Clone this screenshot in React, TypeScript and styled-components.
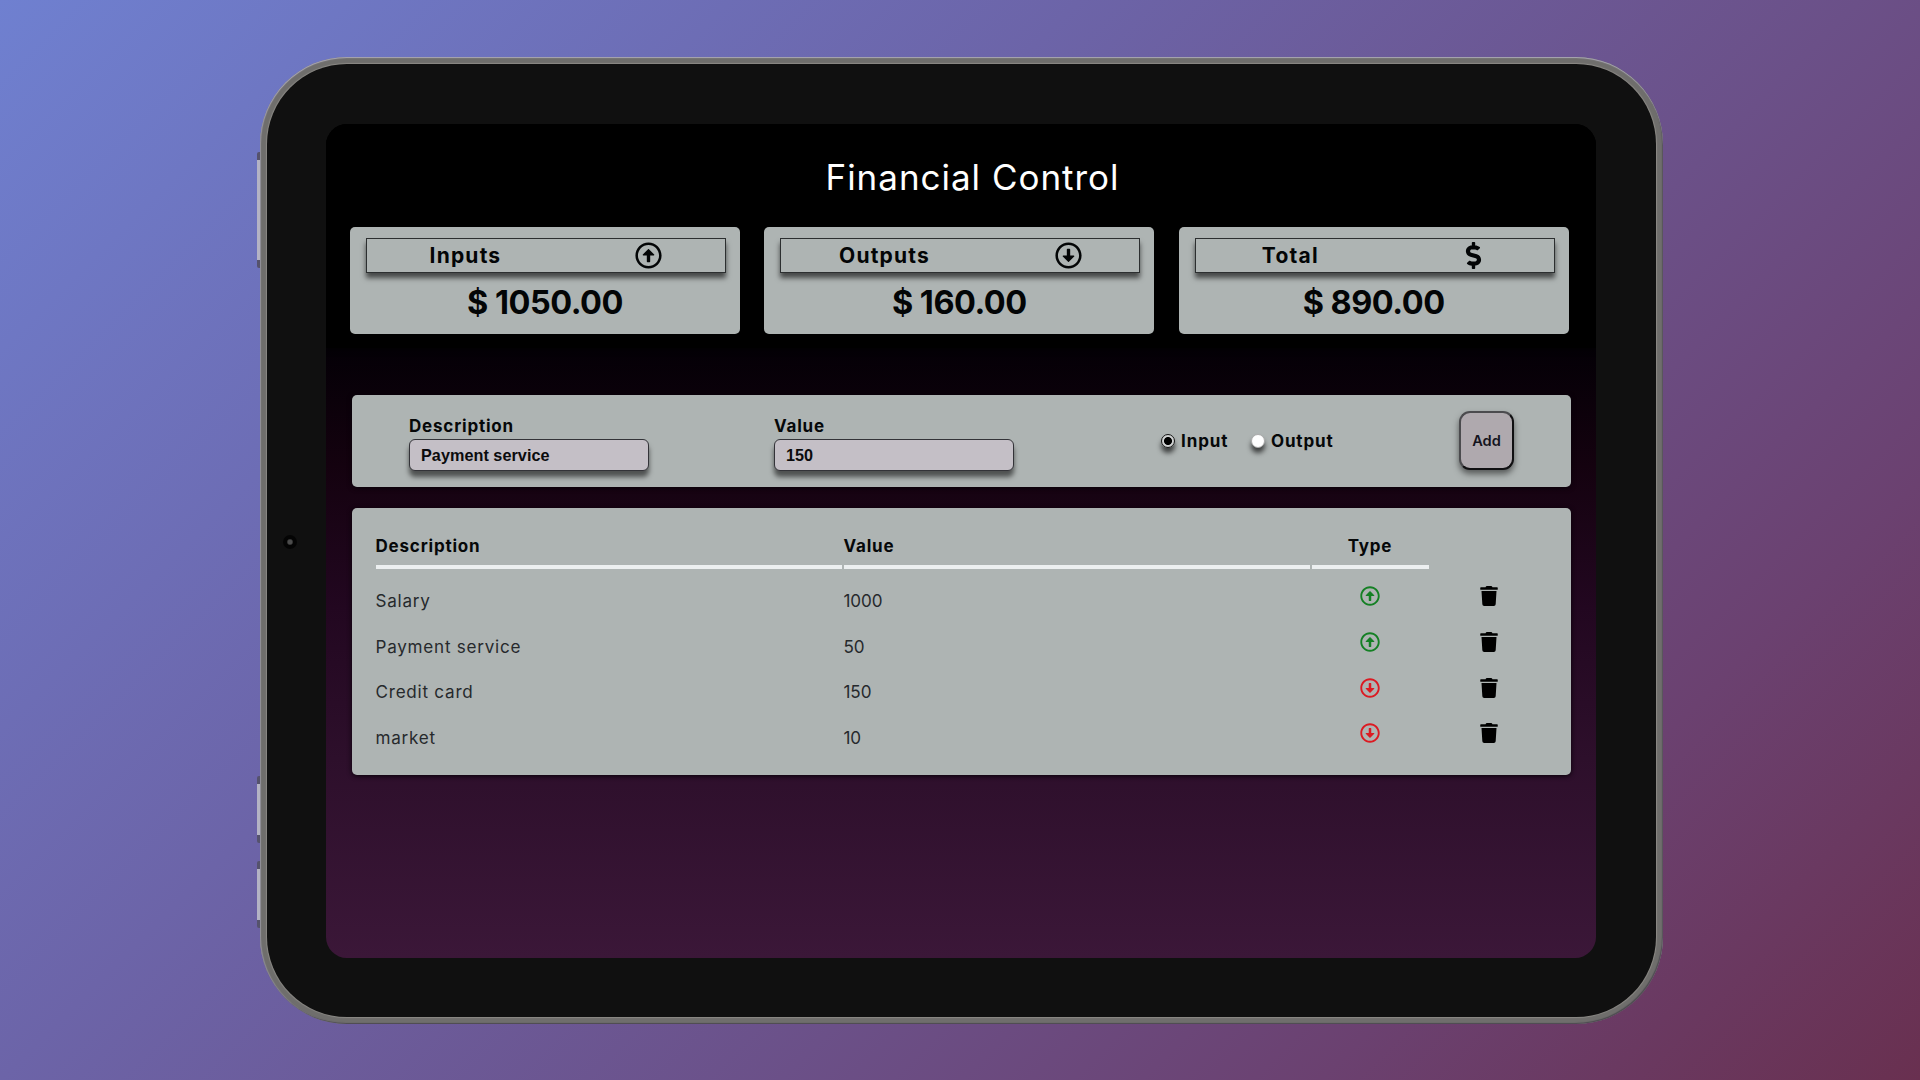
import React from "react";
import styled, { createGlobalStyle } from "styled-components";
import {
  FaRegArrowAltCircleDown,
  FaRegArrowAltCircleUp,
  FaDollarSign,
  FaTrash,
} from "react-icons/fa";

const FONT = `Inter, "Noto Sans", sans-serif`;

const GlobalStyle = createGlobalStyle`
  * { box-sizing: border-box; margin: 0; padding: 0; }
  body { font-family: ${FONT}; overflow: hidden; }
`;

const Backdrop = styled.div`
  width: 1920px;
  height: 1080px;
  padding: 57px 0 0 260px;
  background: linear-gradient(135deg, #6f80d0 0%, #6c64a8 36%, #6b5088 62%, #6b4170 80%, #693050 100%);
`;

const Tablet = styled.div`
  position: relative;
  width: 1403px;
  height: 967px;
  padding: 7px;
  border-radius: 87px;
  background: #6f6e6c;
  box-shadow: inset 0 1px 1px #aaa8b4, inset -1px -1px 1px #4d4a50, inset 1px 0 1px #908e98;
`;

const Bezel = styled.div`
  height: 953px;
  padding: 60px 59px;
  border-radius: 80px;
  background: #101010;
  box-shadow: 0 0 1px 1px #8b8985;
`;

const SideKey = styled.i<{ $top: number; $height: number }>`
  position: absolute;
  left: -3px;
  top: ${(p) => p.$top}px;
  width: 3px;
  height: ${(p) => p.$height}px;
  border: solid #55526c;
  border-width: 8px 0;
  border-radius: 2px 0 0 2px;
  background: #b4b3c4;
`;

const Camera = styled.i`
  position: absolute;
  left: 23px;
  top: 478px;
  width: 14px;
  height: 14px;
  border-radius: 50%;
  background: radial-gradient(circle, #4c4c4c 0 2px, #040404 3.5px);
`;

const Screen = styled.main`
  display: flex;
  flex-direction: column;
  width: 1270px;
  height: 834px;
  overflow: hidden;
  border-radius: 21px;
  background: linear-gradient(180deg, #000 0%, #040006 27%, #14020f 41%, #220720 58%, #2d0f2b 76%, #3b1738 100%);
`;

const Header = styled.header`
  height: 224px;
  padding: 30px 28px 0 24px;
  background: #000;
  box-shadow: 0 0 6px #000;
`;

const Title = styled.h1`
  height: 73px;
  padding-left: 27px;
  line-height: 46px;
  text-align: center;
  font-size: 35px;
  font-weight: 400;
  letter-spacing: 0.98px;
  color: #fff;
`;

const Cards = styled.section`
  display: grid;
  grid-template-columns: repeat(3, 390px);
  gap: 24.3px;
`;

const Card = styled.article`
  height: 107px;
  padding: 11px 14px 0 16px;
  border-radius: 5px;
  background: #aeb4b3;
`;

const CardHead = styled.div`
  display: flex;
  align-items: center;
  justify-content: space-around;
  height: 35px;
  border: 1.5px solid #2c2f30;
  box-shadow: 0 5px 5px rgba(0, 0, 0, 0.6);
  font-size: 27px;
  color: #030506;
`;

const CardTitle = styled.h2`
  margin-right: 9px;
  font-size: 21px;
  font-weight: 650;
  letter-spacing: 1.2px;
`;

const Amount = styled.p`
  padding: 9px 2px 0 0;
  line-height: 42px;
  text-align: center;
  font-size: 32.5px;
  font-weight: 700;
  letter-spacing: -0.5px;
  color: #030506;
`;

const Panel = styled.section`
  width: 1219px;
  margin-left: 25.5px;
  border-radius: 5px;
  background: #aeb4b3;
  box-shadow: 0 1px 5px #080008;
`;

const Form = styled(Panel).attrs({ as: "form" })`
  display: flex;
  align-items: flex-start;
  height: 92px;
  margin-top: 47px;
  padding-left: 57.5px;
`;

const Field = styled.label`
  display: block;
  width: 365px;
  padding-top: 20px;
  line-height: 22px;
  font-size: 17px;
  font-weight: 650;
  letter-spacing: 0.8px;
  color: #060809;
`;

const TextInput = styled.input`
  display: block;
  width: 240px;
  height: 32px;
  margin-top: 2px;
  padding: 1px 11px 0;
  border: 1.5px solid #333338;
  border-radius: 6px;
  background: #c4bfc6;
  box-shadow: 0 6px 5px rgba(0, 0, 0, 0.55);
  font: bold 16.2px "Liberation Sans", Arial, sans-serif;
  letter-spacing: 0.05px;
  color: #0b0b0d;
`;

const Options = styled.div`
  display: flex;
  align-items: center;
  gap: 22.5px;
  width: 320px;
  height: 92px;
  padding-left: 22px;
`;

const Option = styled.label`
  display: flex;
  align-items: center;
  gap: 6px;
  font-size: 17px;
  font-weight: 650;
  letter-spacing: 0.9px;
  color: #060809;
`;

const Radio = styled.input.attrs({ type: "radio" })`
  appearance: none;
  width: 14px;
  height: 14px;
  border-radius: 50%;
  border: 1px solid #aaa;
  background: #fff;
  box-shadow: 0 5px 5px rgba(0, 0, 0, 0.65);

  &:checked {
    border: 1.5px solid #151515;
    background: radial-gradient(circle, #000 0 3.6px, #d0d2d2 4.4px);
  }
`;

const AddButton = styled.button`
  width: 55px;
  height: 59px;
  margin-top: 16px;
  border: 2px solid;
  border-color: #4b4b4e #101012 #101012 #4b4b4e;
  border-radius: 11px;
  background: #afa9ae;
  box-shadow: 0 4px 6px rgba(0, 0, 0, 0.5);
  font: 600 14.6px ${FONT};
  color: #14141e;
`;

const Records = styled(Panel)`
  height: 267px;
  margin-top: 21px;
  padding: 24px;
`;

const Table = styled.table`
  border-spacing: 2px 0;
  margin-left: -2px;
  table-layout: fixed;
  width: 1172px;
`;

const Th = styled.th<{ $width: number; $center?: boolean; $bare?: boolean }>`
  width: ${(p) => p.$width}px;
  height: 37px;
  padding-bottom: 8px;
  border-bottom: ${(p) => (p.$bare ? "0" : "4px solid #eceff0")};
  vertical-align: bottom;
  text-align: ${(p) => (p.$center ? "center" : "left")};
  line-height: 22px;
  font-size: 17px;
  font-weight: 650;
  letter-spacing: 0.8px;
  color: #060809;
`;

const Td = styled.td<{ $spacing: number }>`
  height: 45.7px;
  padding-top: 18px;
  font-size: 17.1px;
  line-height: 24px;
  letter-spacing: ${(p) => p.$spacing}px;
  color: #26292c;
`;

const IconCell = styled.td<{ $color: string }>`
  height: 45.7px;
  padding-top: 9px;
  text-align: center;
  line-height: 0;
  font-size: 20px;
  color: ${(p) => p.$color};
`;

const cards = [
  { title: "Inputs", amount: "$ 1050.00", Icon: FaRegArrowAltCircleUp },
  { title: "Outputs", amount: "$ 160.00", Icon: FaRegArrowAltCircleDown },
  { title: "Total", amount: "$ 890.00", Icon: FaDollarSign },
];

const records = [
  { description: "Salary", value: "1000", expense: false },
  { description: "Payment service", value: "50", expense: false },
  { description: "Credit card", value: "150", expense: true },
  { description: "market", value: "10", expense: true },
];

export default function App() {
  return (
    <Backdrop>
      <GlobalStyle />
      <Tablet>
        <SideKey $top={95} $height={116} />
        <SideKey $top={719} $height={67} />
        <SideKey $top={804} $height={67} />
        <Bezel>
          <Screen>
            <Header>
              <Title>Financial Control</Title>
              <Cards>
                {cards.map(({ title, amount, Icon }) => (
                  <Card key={title}>
                    <CardHead>
                      <CardTitle>{title}</CardTitle>
                      <Icon />
                    </CardHead>
                    <Amount>{amount}</Amount>
                  </Card>
                ))}
              </Cards>
            </Header>
            <Form>
              <Field>
                Description
                <TextInput defaultValue="Payment service" />
              </Field>
              <Field>
                Value
                <TextInput defaultValue="150" />
              </Field>
              <Options>
                <Option>
                  <Radio name="kind" defaultChecked />
                  Input
                </Option>
                <Option>
                  <Radio name="kind" />
                  Output
                </Option>
              </Options>
              <AddButton type="button">Add</AddButton>
            </Form>
            <Records>
              <Table>
                <thead>
                  <tr>
                    <Th $width={466}>Description</Th>
                    <Th $width={466}>Value</Th>
                    <Th $width={117} $center>Type</Th>
                    <Th $width={117} $bare />
                  </tr>
                </thead>
                <tbody>
                  {records.map((r) => (
                    <tr key={r.description}>
                      <Td $spacing={0.75}>{r.description}</Td>
                      <Td $spacing={-0.1}>{r.value}</Td>
                      <IconCell $color={r.expense ? "#dc1a22" : "#148024"}>
                        {r.expense ? <FaRegArrowAltCircleDown /> : <FaRegArrowAltCircleUp />}
                      </IconCell>
                      <IconCell $color="#000">
                        <FaTrash />
                      </IconCell>
                    </tr>
                  ))}
                </tbody>
              </Table>
            </Records>
          </Screen>
        </Bezel>
        <Camera />
      </Tablet>
    </Backdrop>
  );
}
